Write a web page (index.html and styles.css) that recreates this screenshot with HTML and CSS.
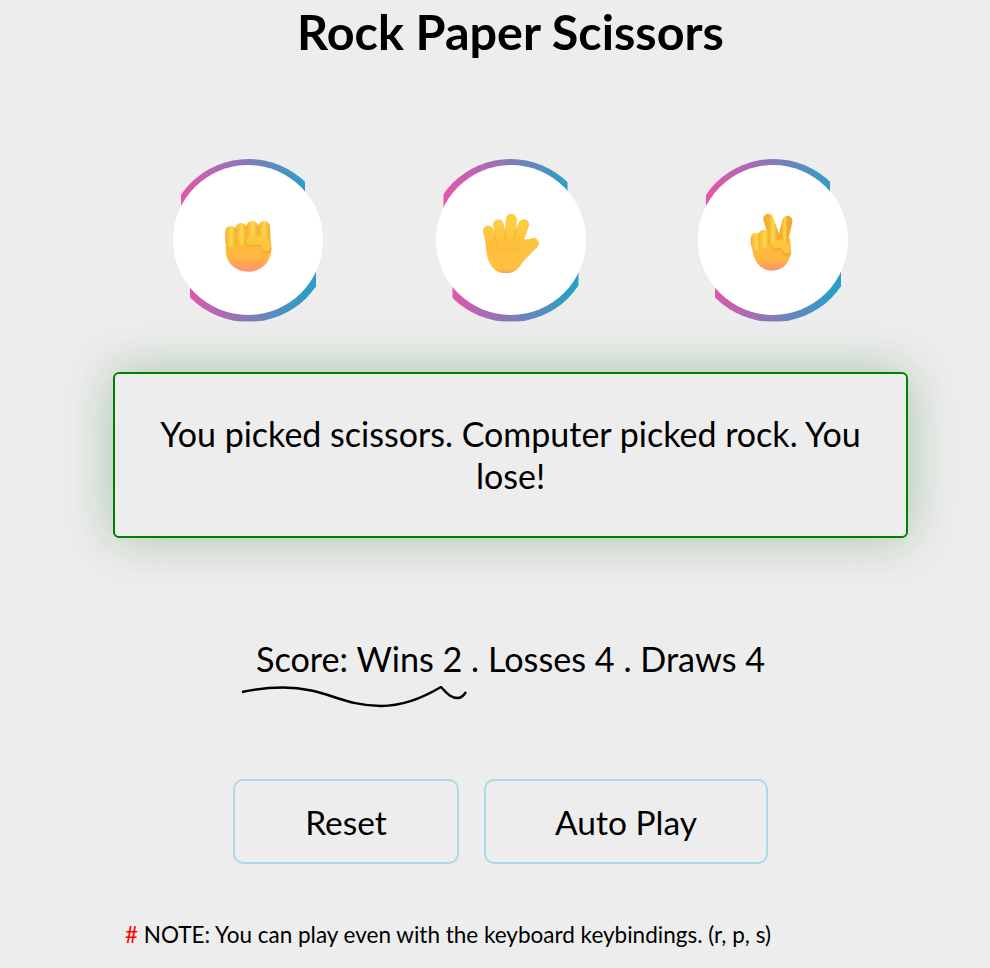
FILE: index.html
```html
<!DOCTYPE html>
<html lang="en">
<head>
<meta charset="utf-8">
<title>Rock Paper Scissors</title>
<link rel="stylesheet" href="styles.css">
</head>
<body>
<svg class="defs" width="0" height="0" aria-hidden="true">
  <defs>
    <linearGradient id="palm" x1="0" y1="0" x2="0" y2="1">
      <stop offset="0" stop-color="#fdbb3a"/><stop offset=".65" stop-color="#ffb83f"/><stop offset="1" stop-color="#ff8f6e"/>
    </linearGradient>
    <linearGradient id="palmsoft" x1="0" y1="0" x2="0" y2="1">
      <stop offset="0" stop-color="#fdc440"/><stop offset=".85" stop-color="#ffc03f"/><stop offset="1" stop-color="#ff9f5a"/>
    </linearGradient>
    <linearGradient id="finger" x1="0" y1="0" x2="1" y2="0">
      <stop offset="0" stop-color="#f5ae2e"/><stop offset=".55" stop-color="#ffd84a"/><stop offset="1" stop-color="#f3a92e"/>
    </linearGradient>
    <linearGradient id="fingerv" gradientUnits="userSpaceOnUse" x1="0" y1="210" x2="0" y2="300">
      <stop offset="0" stop-color="#fdcf45"/><stop offset="1" stop-color="#fdbd3a"/>
    </linearGradient>
  </defs>
</svg>
<main class="game">
  <h1 class="title">Rock Paper Scissors</h1>
  <div class="hands">
    <div class="hand">
      <button class="hand-btn" aria-label="rock">
        <svg class="emoji" viewBox="165 171 198 198" width="66" height="66">
          <path d="M197 262 L197 300 C197 340 228 365 265 365 C305 365 334 335 334 295 L330 240 Z" fill="url(#palm)"/>
          <rect x="196" y="228" width="33" height="62" rx="16" fill="url(#finger)"/>
          <rect x="226" y="219" width="35" height="66" rx="17" fill="url(#finger)"/>
          <rect x="259" y="213" width="36" height="68" rx="18" fill="url(#finger)"/>
          <rect x="294" y="213" width="36" height="66" rx="18" fill="url(#finger)"/>
          <path d="M272 276 L300 274 C312 274 318 284 320 296" fill="none" stroke="#f59a2e" stroke-width="30" stroke-linecap="round" opacity=".55"/>
          <path d="M272 272 L300 270 C312 270 318 280 319 290" fill="none" stroke="#fdc63f" stroke-width="27" stroke-linecap="round"/>
        </svg>
      </button>
    </div>
    <div class="hand">
      <button class="hand-btn" aria-label="paper">
        <svg class="emoji" viewBox="159 171 198 198" width="66" height="66">
          <path d="M181 268 C182 310 188 370 243 370 C282 370 288 340 312 310 L318 268 Z" fill="url(#palmsoft)"/>
          <path d="M190 243 L205 305" stroke="url(#fingerv)" stroke-width="32" stroke-linecap="round"/>
          <path d="M220 224 L232 295" stroke="url(#fingerv)" stroke-width="32" stroke-linecap="round"/>
          <path d="M259 208 L254 290" stroke="url(#fingerv)" stroke-width="33" stroke-linecap="round"/>
          <path d="M296 224 L270 295" stroke="url(#fingerv)" stroke-width="33" stroke-linecap="round"/>
          <path d="M325 280 L285 320" stroke="#fdc240" stroke-width="33" stroke-linecap="round"/>
          <path d="M207 250 L215 285 M240 232 L241 275 M277 235 L264 272" fill="none" stroke="#e9a02c" stroke-width="3" stroke-linecap="round" opacity=".55"/>
        </svg>
      </button>
    </div>
    <div class="hand">
      <button class="hand-btn" aria-label="scissors">
        <svg class="emoji" viewBox="150 171 198 198" width="66" height="66">
          <path d="M186 285 C186 335 215 362 245 362 C280 362 303 335 303 300 L300 265 L190 265 Z" fill="url(#palm)"/>
          <path d="M235 207 L262 285" stroke="url(#finger)" stroke-width="31" stroke-linecap="round"/>
          <path d="M292 213 L275 285" stroke="url(#finger)" stroke-width="31" stroke-linecap="round"/>
          <rect x="182" y="248" width="32" height="50" rx="16" fill="url(#finger)"/>
          <rect x="205" y="239" width="35" height="56" rx="17" fill="url(#finger)"/>
          <path d="M258 288 C272 282 285 288 290 305" fill="none" stroke="#f59a2e" stroke-width="28" stroke-linecap="round" opacity=".5"/>
          <path d="M258 284 C272 278 285 284 290 298" fill="none" stroke="#fdc63f" stroke-width="24" stroke-linecap="round"/>
        </svg>
      </button>
    </div>
  </div>
  <p class="result">You picked scissors. Computer picked rock. You lose!</p>
  <div class="score-wrap">
    <p class="score">Score: Wins 2 . Losses 4 . Draws 4</p>
    <svg class="squiggle" viewBox="0 0 228 24" width="228" height="24">
      <path d="M1 6 C15 3 30 1.5 42 1.5 C85 1.5 100 20 140 20 C165 20 185 10 200 1 C205 6 209 12 217 12 C220 12 223 9 225 6" fill="none" stroke="#000" stroke-width="2.4"/>
    </svg>
  </div>
  <div class="actions">
    <button class="action reset">Reset</button>
    <button class="action auto">Auto Play</button>
  </div>
  <p class="note"><span class="hash">#</span> NOTE: You can play even with the keyboard keybindings. (r, p, s)</p>
</main>
</body>
</html>
```
FILE: styles.css
```css
* { box-sizing: border-box; }
html, body { margin: 0; padding: 0; }
body {
  background: #ededed;
  color: #000;
  font-family: "Lato", "Liberation Sans", sans-serif;
  height: 968px;
  overflow: hidden;
}
.defs { position: absolute; }
.game { display: flex; flex-direction: column; align-items: center; width: 1021px; }
.title {
  margin: 0;
  padding-top: 4px;
  height: 165px;
  font-size: 48.5px;
  line-height: 54px;
  font-weight: 700;
  text-align: center;
}
.hands { display: flex; gap: 112.5px; justify-content: center; }
.hand { position: relative; width: 150px; height: 150px; }
.hand::before {
  content: "";
  position: absolute;
  left: -6.5px;
  top: -6.5px;
  width: 163px;
  height: 163px;
  border-radius: 50%;
  background: linear-gradient(90deg, #e654ab 10%, #2a9ec6 86%);
  clip-path: polygon(14.5px 0, 138.5px 0, 138.5px 50%, 149.5px 50%, 149.5px 100%, 23.5px 100%, 23.5px 50%, 14.5px 50%);
}
.hand-btn {
  position: relative;
  display: flex;
  align-items: center;
  justify-content: center;
  width: 150px;
  height: 150px;
  padding: 0;
  border: 0;
  border-radius: 50%;
  background: #fff;
}
.emoji { display: block; }
.result {
  margin: 57px 0 0;
  width: 795px;
  padding: 39px 30px;
  border: 2px solid #008000;
  border-radius: 6px;
  font-size: 34px;
  line-height: 42px;
  text-align: center;
  box-shadow: 0 0 50px rgba(0, 100, 0, .3);
}
.score-wrap { position: relative; margin-top: 100px; }
.score { margin: 0; font-size: 34.2px; line-height: 42px; white-space: nowrap; }
.squiggle { position: absolute; left: -15px; top: 48px; }
.actions { display: flex; gap: 25px; margin-top: 99px; padding-right: 20px; }
.action {
  height: 85px;
  border: 2px solid #add8e6;
  border-radius: 10px;
  background: transparent;
  color: #000;
  font-family: inherit;
  font-size: 33.5px;
}
.reset { width: 226px; }
.auto { width: 284px; }
.note {
  align-self: flex-start;
  margin: 56px 0 0 125px;
  font-size: 22.5px;
  line-height: 30px;
  white-space: nowrap;
}
.hash { color: #f00; }
```
